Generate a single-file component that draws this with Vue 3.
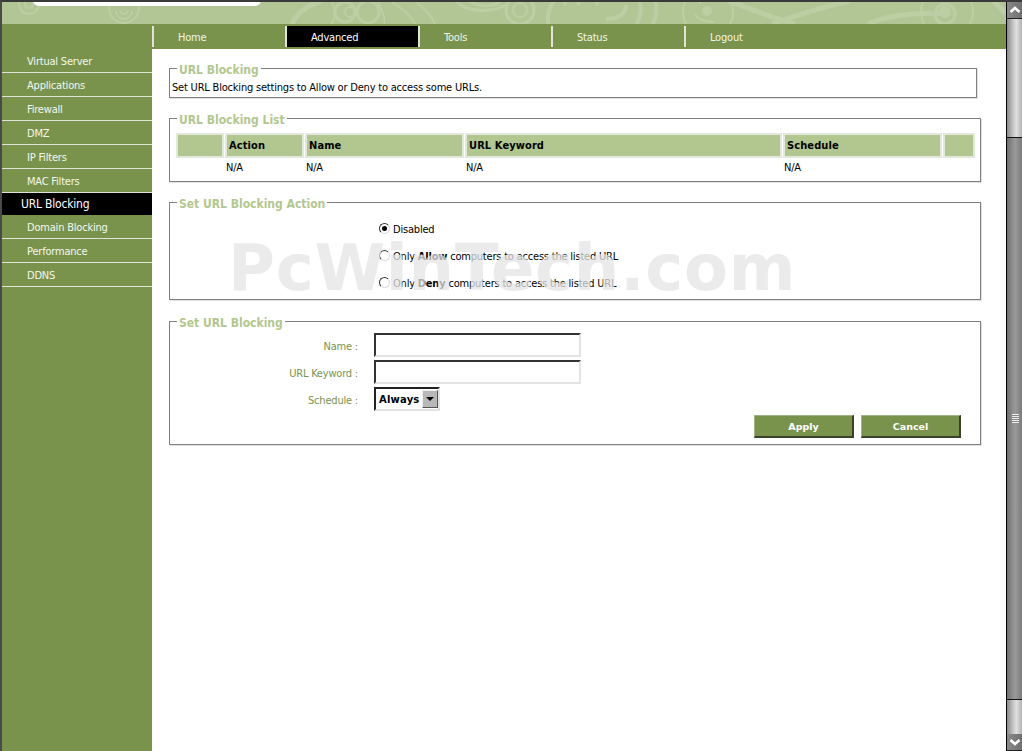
<script setup>
const sideItems = ['Virtual Server', 'Applications', 'Firewall', 'DMZ', 'IP Filters', 'MAC Filters', 'URL Blocking', 'Domain Blocking', 'Performance', 'DDNS']
const tabs = ['Home', 'Advanced', 'Tools', 'Status', 'Logout']
const cols = [
  { label: '', w: 48 },
  { label: 'Action', w: 79 },
  { label: 'Name', w: 159 },
  { label: 'URL Keyword', w: 317 },
  { label: 'Schedule', w: 159 },
  { label: '', w: 32 }
]
</script>

<template>
  <div class="window">
    <div class="page">
      <header class="banner">
        <svg class="art" width="1004" height="22" viewBox="2 2 1004 22" fill="none" stroke="#bccea3" stroke-width="2">
          <circle cx="29" cy="4" r="10" />
          <circle cx="29" cy="4" r="4" />
          <circle cx="124" cy="8" r="15" />
          <path d="M116 11 a8 8 0 0 0 16 0 M120 10 a4 4 0 0 0 8 0" />
          <path d="M291 26 C296 14 306 5 322 1" stroke-width="5" />
          <circle cx="345" cy="12" r="10" stroke-width="3" />
          <circle cx="350" cy="12" r="5" />
          <circle cx="368" cy="12" r="11" stroke-width="3" />
          <path d="M332 2 C336 12 336 18 330 26 M378 2 C382 10 386 18 384 26 M392 2 C404 10 412 16 416 26 M416 2 C424 8 432 16 436 26" stroke-width="2" />
          <path d="M455 0 C465 12 490 14 508 4 M468 0 C475 6 490 8 500 2" stroke-width="3" />
          <circle cx="520" cy="10" r="14" stroke-width="3" />
          <circle cx="520" cy="10" r="7" />
          <path d="M549 26 C546 16 549 8 554 1 M655 1 C658 10 656 18 652 26 M640 1 C642 10 640 18 636 26" stroke-width="4" />
          <path d="M606 19 C618 19 626 14 626 5 M564 2 L566 5 M578 2 L579 5 M596 2 L598 5" stroke-width="4" />
          <circle cx="708" cy="12" r="25" stroke-width="2" />
          <circle cx="707" cy="11" r="4" fill="#bccea3" />
          <path d="M695 14 C698 20 704 22 714 22 M700 2 L700 4" stroke-width="2" />
          <path d="M728 1 C745 6 765 16 795 24 M850 1 C825 6 795 16 772 24 M868 24 C890 14 925 12 950 14" stroke-width="5" />
          <circle cx="947" cy="12" r="26" stroke-width="2" />
          <circle cx="945" cy="12" r="5" fill="#bccea3" />
          <circle cx="945" cy="14" r="10" stroke-width="3" />
          <path d="M993 1 C998 5 1002 9 1006 14" stroke-width="5" />
        </svg>
        <div class="logo-plate"></div>
      </header>

      <div class="body-row">
        <aside class="sidebar">
          <a v-for="item in sideItems" :key="item" class="side-item" :class="{ active: item === 'URL Blocking' }">{{ item }}</a>
        </aside>

        <div class="main">
          <nav class="tabs">
            <a v-for="t in tabs" :key="t" class="tab" :class="{ active: t === 'Advanced' }">{{ t }}</a>
          </nav>

          <div class="content">
            <fieldset class="box narrow">
              <legend>URL Blocking</legend>
              <div class="intro">Set URL Blocking settings to Allow or Deny to access some URLs.</div>
            </fieldset>

            <fieldset class="box list">
              <legend>URL Blocking List</legend>
              <div class="head-row">
                <div v-for="(c, i) in cols" :key="i" class="head-cell" :style="{ width: c.w + 'px' }">{{ c.label }}</div>
              </div>
              <div class="data-row">
                <div v-for="(c, i) in cols" :key="i" class="data-cell" :style="{ width: c.w + 'px' }">{{ c.label ? 'N/A' : '' }}</div>
              </div>
            </fieldset>

            <fieldset class="box action">
              <legend>Set URL Blocking Action</legend>
              <label class="radio-row"><span class="radio on"></span>Disabled</label>
              <label class="radio-row"><span class="radio"></span>Only&nbsp;<b>Allow</b>&nbsp;computers to access the listed URL</label>
              <label class="radio-row"><span class="radio"></span>Only&nbsp;<b>Deny</b>&nbsp;computers to access the listed URL</label>
            </fieldset>

            <fieldset class="box form">
              <legend>Set URL Blocking</legend>
              <div class="form-row">
                <span class="form-label">Name :</span>
                <div class="field"></div>
              </div>
              <div class="form-row">
                <span class="form-label">URL Keyword :</span>
                <div class="field"></div>
              </div>
              <div class="form-row">
                <span class="form-label">Schedule :</span>
                <div class="select">
                  <span class="select-value">Always</span>
                  <span class="select-btn"><i class="caret"></i></span>
                </div>
              </div>
              <div class="actions">
                <button class="btn">Apply</button>
                <button class="btn">Cancel</button>
              </div>
            </fieldset>

            <div class="watermark">PcWinTech.com</div>
          </div>
        </div>
      </div>
    </div>

    <div class="scrollbar">
      <div class="sb-btn">
        <svg width="12" height="8" viewBox="0 0 12 8"><path d="M1.5 6 L6 2 L10.500 6" fill="none" stroke="#fff" stroke-width="2.500" /></svg>
      </div>
      <div class="sb-track top"></div>
      <div class="sb-thumb"><span class="grip"></span></div>
      <div class="sb-track bottom"></div>
      <div class="sb-btn">
        <svg width="12" height="8" viewBox="0 0 12 8"><path d="M1.5 2 L6 6 L10.500 2" fill="none" stroke="#fff" stroke-width="2.500" /></svg>
      </div>
    </div>
  </div>
</template>

<style>
html, body { margin: 0; padding: 0; background: #fff; overflow: hidden; }
</style>

<style scoped>
.window {
  width: 1022px;
  height: 751px;
  box-sizing: border-box;
  display: flex;
  border-top: 2px solid #3a3a3a;
  border-left: 2px solid #4a4a4a;
  overflow: hidden;
  font-family: "DejaVu Sans Condensed", "DejaVu Sans", sans-serif;
  font-stretch: condensed;
  font-size: 11px;
  letter-spacing: -.2px;
  background: #fff;
}
.page { width: 1004px; display: flex; flex-direction: column; }
.banner { height: 22px; background: #b2c695; position: relative; overflow: hidden; flex: none; }
.art { display: block; }
.logo-plate {
  position: absolute;
  left: 31px;
  top: -10px;
  width: 228px;
  height: 14px;
  background: #fff;
  border-radius: 0 0 6px 6px;
}
.body-row { flex: 1; display: flex; min-height: 0; }
.sidebar {
  width: 150px;
  flex: none;
  background: #7a934c;
  padding-top: 25px;
  box-sizing: border-box;
}
.side-item {
  display: block;
  height: 24px;
  box-sizing: border-box;
  padding-left: 25px;
  line-height: 25px;
  color: #f4f7ee;
  border-bottom: 1px solid #dfe5d6;
}
.side-item.active {
  background: #000;
  color: #fff;
  padding-left: 19px;
  font-size: 12px;
  height: 22px;
  line-height: 23px;
  border-bottom: none;
}
.main { flex: 1; display: flex; flex-direction: column; min-width: 0; }
.tabs {
  height: 25px;
  box-sizing: border-box;
  background: #7a934c;
  padding-top: 2px;
  display: flex;
  align-items: flex-start;
}
.tab {
  width: 133px;
  height: 21px;
  box-sizing: border-box;
  border-left: 2px solid #dfe5d6;
  padding-left: 24px;
  line-height: 23px;
  color: #f0f4e8;
}
.tab.active { background: #000; color: #fff; }
.content { flex: 1; position: relative; padding: 12px 0 0 17px; }
.box {
  margin: 0;
  padding: 0;
  width: 812px;
  box-sizing: border-box;
  border: 1px solid #808080;
  border-radius: 0;
  box-shadow: 1px 1px 0 #e2e2e2;
  min-width: 0;
}
.box.narrow { width: 808px; height: 37px; margin-bottom: 13px; }
.box.list { height: 71px; margin-bottom: 13px; }
.box.action { height: 105px; margin-bottom: 14px; }
.box.form { height: 131px; }
legend {
  margin-left: 7px;
  padding: 3px 2px 0 2px;
  color: #b2c78f;
  font-size: 12px;
  font-weight: 700;
  line-height: 12px;
  letter-spacing: 0;
}
.intro { color: #000; padding: 5px 0 0 2px; line-height: 14px; }
.head-row { display: flex; margin: 7px 0 0 6px; gap: 1px; }
.head-cell {
  box-sizing: border-box;
  height: 25px;
  background: #b2c78f;
  border: 2px solid #e3e8dc;
  padding-left: 2px;
  font-weight: 700;
  font-size: 11px;
  letter-spacing: .1px;
  line-height: 22px;
  color: #000;
}
.data-row { display: flex; margin-left: 6px; gap: 1px; height: 18px; line-height: 20px; color: #000; }
.data-cell { box-sizing: border-box; padding-left: 1px; }
.action { padding-top: 6px; }
.radio-row { display: flex; align-items: center; height: 27px; padding-left: 209px; color: #000; }
.radio {
  width: 11px;
  height: 11px;
  box-sizing: border-box;
  border-radius: 50%;
  border: 1px solid #333;
  border-right-color: #ddd;
  border-bottom-color: #ddd;
  background: #fff;
  margin: -2px 3px 0 0;
  position: relative;
  flex: none;
}
.radio.on::after {
  content: "";
  position: absolute;
  left: 2px;
  top: 2px;
  width: 5px;
  height: 5px;
  border-radius: 50%;
  background: #000;
}
.form { padding-top: 4px; }
.form-row { display: flex; align-items: flex-start; height: 27px; }
.form-label { width: 188px; text-align: right; color: #7a934c; flex: none; line-height: 28px; }
.field {
  margin-left: 16px;
  width: 207px;
  height: 24px;
  box-sizing: border-box;
  border: 2px solid #e3e3e3;
  border-top-color: #333;
  border-left-color: #333;
  background: #fff;
}
.select {
  margin-left: 16px;
  display: flex;
  height: 24px;
  width: 66px;
  box-sizing: border-box;
  border: 2px solid #e3e3e3;
  border-top-color: #222;
  border-left-color: #222;
  align-items: center;
}
.select-value { flex: 1; padding-left: 3px; font-family: "DejaVu Sans", sans-serif; font-stretch: normal; font-weight: 700; font-size: 10px; color: #000; letter-spacing: .2px; }
.select-btn {
  width: 16px;
  height: 18px;
  background: #b8b8b8;
  border: 1px solid #eee;
  border-right-color: #555;
  border-bottom-color: #555;
  box-sizing: border-box;
  display: flex;
  align-items: center;
  justify-content: center;
}
.caret { width: 0; height: 0; border: 4px solid transparent; border-top: 4px solid #000; border-bottom: 0; }
.actions { display: flex; justify-content: flex-end; gap: 7px; padding: 0 19px 0 0; margin-top: 1px; }
.btn {
  width: 100px;
  height: 23px;
  box-sizing: border-box;
  background: #7a934c;
  color: #fff;
  font: 700 9.500px "DejaVu Sans", sans-serif;
  border: 1px solid #a3b585;
  border-right: 2px solid #39412a;
  border-bottom: 2px solid #39412a;
  padding: 0;
}
.watermark {
  position: absolute;
  left: 76px;
  top: 187px;
  font: 700 64px/1 "DejaVu Sans", sans-serif;
  font-stretch: normal;
  color: rgba(228, 228, 228, .75);
  white-space: nowrap;
  pointer-events: none;
  letter-spacing: .8px;
}
.scrollbar { flex: none; display: flex; flex-direction: column; background: #444; border-left: 1px solid #000; box-sizing: border-box; width: 17px; }
.sb-btn {
  height: 17px;
  flex: none;
  background: linear-gradient(90deg, #8a8a8a, #6e6e6e);
  border-bottom: 1px solid #222;
  box-sizing: border-box;
  display: flex;
  align-items: center;
  justify-content: center;
}
.sb-track { background: linear-gradient(90deg, #8a8a8a 0%, #cfcfcf 45%, #e0e0e0 60%, #a8a8a8 100%); flex: none; }
.sb-track.top { height: 119px; border-bottom: 1px solid #111; box-sizing: border-box; }
.sb-track.bottom { height: 35px; border-top: 1px solid #111; box-sizing: border-box; }
.sb-thumb {
  flex: 1;
  background: linear-gradient(90deg, #6f6f6f 0%, #9a9a9a 50%, #777 100%);
  display: flex;
  align-items: center;
  justify-content: center;
}
.grip {
  width: 7px;
  height: 9px;
  background: repeating-linear-gradient(180deg, #eee 0 1px, #888 1px 2px);
}
</style>
